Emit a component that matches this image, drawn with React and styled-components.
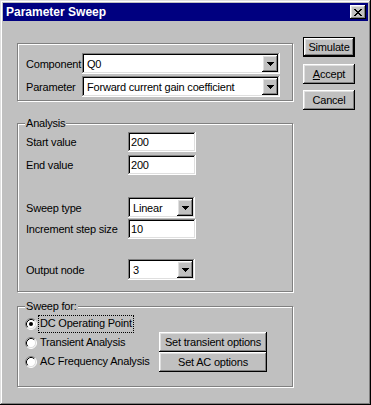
import React from 'react'
import styled, { createGlobalStyle } from 'styled-components'

const GlobalStyle = createGlobalStyle`
  html, body {
    margin: 0;
    padding: 0;
    background: #c0c0c0;
  }
  body {
    font-family: "Liberation Sans", Arial, sans-serif;
    font-size: 11px;
    letter-spacing: -0.2px;
    color: #000;
  }
`

const raised = `
  box-shadow: inset -1px -1px #000, inset 1px 1px #fff, inset -2px -2px #808080, inset 2px 2px #dfdfdf;
`

const sunken = `
  box-shadow: inset -1px -1px #fff, inset 1px 1px #808080, inset -2px -2px #dfdfdf, inset 2px 2px #000;
`

const Window = styled.div`
  width: 371px;
  height: 405px;
  box-sizing: border-box;
  padding: 3px;
  background: #c0c0c0;
  box-shadow: inset -1px -1px #000, inset 1px 1px #dfdfdf, inset -2px -2px #808080, inset 2px 2px #fff;
`

const TitleBar = styled.div`
  height: 18px;
  background: #000080;
  display: flex;
  align-items: center;
  justify-content: space-between;
  padding: 0 2px 0 3px;
  color: #fff;
  font-weight: bold;
  font-size: 12px;
  letter-spacing: 0;
`

const CloseButton = styled.div`
  width: 16px;
  height: 14px;
  background: #c0c0c0;
  display: flex;
  align-items: center;
  justify-content: center;
  ${raised}
`

const Body = styled.div`
  display: flex;
  align-items: flex-start;
  padding-left: 14px;
`

const LeftCol = styled.div`
  width: 276px;
  padding-top: 22px;
  display: flex;
  flex-direction: column;
`

const RightCol = styled.div`
  margin-left: 10px;
  padding-top: 16px;
  display: flex;
  flex-direction: column;
`

const Group = styled.div`
  position: relative;
  box-sizing: border-box;
  height: ${(p) => p.$h}px;
  margin-top: ${(p) => p.$mt || 0}px;
  padding: ${(p) => p.$pad};
  border: 1px solid #808080;
  box-shadow: 1px 1px 0 #fff, inset 1px 1px 0 #fff;
`

const Legend = styled.span`
  position: absolute;
  top: -7px;
  left: 7px;
  padding: 0 1px;
  line-height: 13px;
  background: #c0c0c0;
`

const Row = styled.div`
  display: flex;
  align-items: center;
  margin-top: ${(p) => p.$mt || 0}px;
`

const Label = styled.span`
  width: ${(p) => p.$w}px;
  flex: none;
`

const Field = styled.div`
  box-sizing: border-box;
  width: ${(p) => p.$w}px;
  height: ${(p) => p.$h || 20}px;
  background: #fff;
  display: flex;
  align-items: center;
  padding-left: 3px;
  ${sunken}
`

const ComboBox = styled(Field)`
  padding: 2px;
  padding-left: 5px;
  justify-content: space-between;
`

const DropButton = styled.div`
  width: 16px;
  height: 17px;
  flex: none;
  background: #c0c0c0;
  display: flex;
  align-items: center;
  justify-content: center;
  ${raised}
`

const Button = styled.div`
  box-sizing: border-box;
  width: ${(p) => p.$w}px;
  height: 20px;
  margin-top: ${(p) => p.$mt || 0}px;
  background: #c0c0c0;
  display: flex;
  align-items: center;
  justify-content: center;
  ${(p) =>
    p.$default
      ? 'box-shadow: inset 0 0 0 1px #000, inset -2px -2px #000, inset 2px 2px #fff, inset -3px -3px #808080, inset 3px 3px #dfdfdf;'
      : raised}
`

const SweepBody = styled.div`
  display: flex;
  align-items: flex-start;
`

const RadioCol = styled.div`
  width: 141px;
  padding-left: 7px;
  box-sizing: border-box;
  display: flex;
  flex-direction: column;
`

const RadioRow = styled.div`
  height: 19px;
  display: flex;
  align-items: center;
`

const RadioText = styled.span`
  margin-left: 1px;
  padding: 1px 1px 2px;
  line-height: 13px;
  border: 1px dotted ${(p) => (p.$focus ? '#000' : 'transparent')};
`

const ButtonStack = styled.div`
  margin-top: 18px;
  display: flex;
  flex-direction: column;
`

function Arrow() {
  return (
    <svg width="7" height="4" viewBox="0 0 7 4">
      <path d="M0 0h7v1H0zM1 1h5v1H1zM2 2h3v1H2zM3 3h1v1H3z" fill="#000" />
    </svg>
  )
}

function Combo({ w, value }) {
  return (
    <ComboBox $w={w} $h={21}>
      <span>{value}</span>
      <DropButton>
        <Arrow />
      </DropButton>
    </ComboBox>
  )
}

function Radio({ checked }) {
  return (
    <svg width="12" height="12" viewBox="0 0 12 12" style={{ flex: 'none' }}>
      <circle cx="6" cy="6" r="5" fill="#fff" />
      <path d="M2.11 9.89A5.5 5.5 0 0 1 9.89 2.11" stroke="#808080" fill="none" />
      <path d="M9.89 2.11A5.5 5.5 0 0 1 2.11 9.89" stroke="#fff" fill="none" />
      <path d="M2.82 9.18A4.5 4.5 0 0 1 9.18 2.82" stroke="#000" fill="none" />
      <path d="M9.18 2.82A4.5 4.5 0 0 1 2.82 9.18" stroke="#dfdfdf" fill="none" />
      {checked && <circle cx="6" cy="6" r="2" fill="#000" />}
    </svg>
  )
}

export default function App() {
  return (
    <Window>
      <GlobalStyle />
      <TitleBar>
        <span>Parameter Sweep</span>
        <CloseButton>
          <svg width="8" height="7" viewBox="0 0 8 7">
            <path
              d="M0 0h2v1H0zM6 0h2v1H6zM1 1h2v1H1zM5 1h2v1H5zM2 2h4v1H2zM3 3h2v1H3zM2 4h4v1H2zM1 5h2v1H1zM5 5h2v1H5zM0 6h2v1H0zM6 6h2v1H6z"
              fill="#000"
            />
          </svg>
        </CloseButton>
      </TitleBar>
      <Body>
        <LeftCol>
          <Group $h={58} $pad="9px 0 0 8px">
            <Row>
              <Label $w={56}>Component</Label>
              <Combo w={198} value="Q0" />
            </Row>
            <Row $mt={2}>
              <Label $w={56}>Parameter</Label>
              <Combo w={198} value="Forward current gain coefficient" />
            </Row>
          </Group>

          <Group $h={169} $mt={22} $pad="8px 0 0 8px">
            <Legend>Analysis</Legend>
            <Row>
              <Label $w={102}>Start value</Label>
              <Field $w={68}>200</Field>
            </Row>
            <Row $mt={3}>
              <Label $w={102}>End value</Label>
              <Field $w={68}>200</Field>
            </Row>
            <Row $mt={22}>
              <Label $w={102}>Sweep type</Label>
              <Combo w={67} value="Linear" />
            </Row>
            <Row $mt={1}>
              <Label $w={102}>Increment step size</Label>
              <Field $w={68}>10</Field>
            </Row>
            <Row $mt={20}>
              <Label $w={102}>Output node</Label>
              <Combo w={67} value="3" />
            </Row>
          </Group>

          <Group $h={81} $mt={14} $pad="7px 0 0 0">
            <Legend>Sweep for:</Legend>
            <SweepBody>
              <RadioCol>
                <RadioRow>
                  <Radio checked />
                  <RadioText $focus>DC Operating Point</RadioText>
                </RadioRow>
                <RadioRow>
                  <Radio />
                  <RadioText>Transient Analysis</RadioText>
                </RadioRow>
                <RadioRow>
                  <Radio />
                  <RadioText>AC Frequency Analysis</RadioText>
                </RadioRow>
              </RadioCol>
              <ButtonStack>
                <Button $w={108}>Set transient options</Button>
                <Button $w={108}>Set AC options</Button>
              </ButtonStack>
            </SweepBody>
          </Group>
        </LeftCol>

        <RightCol>
          <Button $w={52} $default>
            Simulate
          </Button>
          <Button $w={52} $mt={7}>
            <span>
              <u>A</u>ccept
            </span>
          </Button>
          <Button $w={52} $mt={6}>
            Cancel
          </Button>
        </RightCol>
      </Body>
    </Window>
  )
}
